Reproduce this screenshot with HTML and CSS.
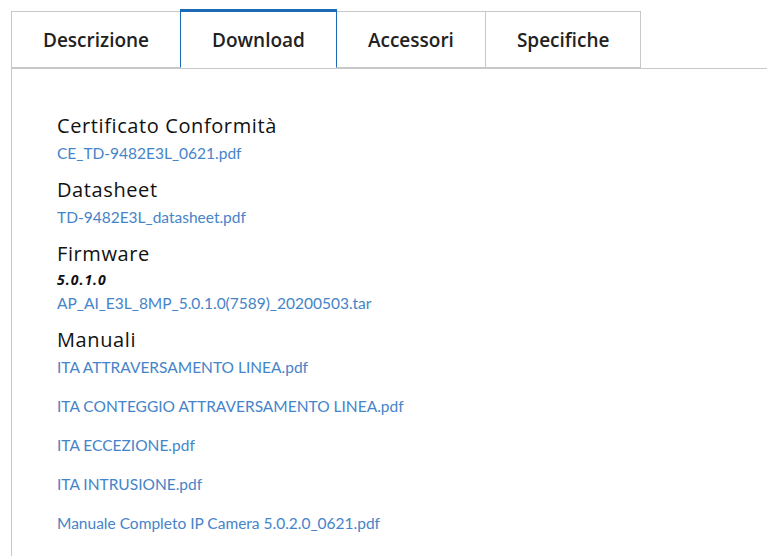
FILE: index.html
```html
<!DOCTYPE html>
<html lang="it">
<head>
    <meta charset="UTF-8">
    <meta name="viewport" content="width=device-width, initial-scale=1.0">
    <title>Download</title>
    <link rel="stylesheet" href="styles.css">
</head>
<body>
    <div class="product-tabs">
        <ul class="tab-nav">
            <li class="tab">Descrizione</li>
            <li class="tab active">Download</li>
            <li class="tab">Accessori</li>
            <li class="tab">Specifiche</li>
        </ul>
        <div class="tab-panel">
            <div class="doc-group">
                <h3>Certificato Conformità</h3>
                <ul class="doc-list">
                    <li><a href="#">CE_TD-9482E3L_0621.pdf</a></li>
                </ul>
            </div>
            <div class="doc-group">
                <h3>Datasheet</h3>
                <ul class="doc-list">
                    <li><a href="#">TD-9482E3L_datasheet.pdf</a></li>
                </ul>
            </div>
            <div class="doc-group">
                <h3>Firmware</h3>
                <div class="version">5.0.1.0</div>
                <ul class="doc-list">
                    <li><a href="#">AP_AI_E3L_8MP_5.0.1.0(7589)_20200503.tar</a></li>
                </ul>
            </div>
            <div class="doc-group">
                <h3>Manuali</h3>
                <ul class="doc-list">
                    <li><a href="#">ITA ATTRAVERSAMENTO LINEA.pdf</a></li>
                    <li><a href="#">ITA CONTEGGIO ATTRAVERSAMENTO LINEA.pdf</a></li>
                    <li><a href="#">ITA ECCEZIONE.pdf</a></li>
                    <li><a href="#">ITA INTRUSIONE.pdf</a></li>
                    <li><a href="#">Manuale Completo IP Camera 5.0.2.0_0621.pdf</a></li>
                </ul>
            </div>
        </div>
    </div>
</body>
</html>
```

FILE: styles.css
```css
body {
    margin: 0;
    font-family: Lato, "Noto Sans", sans-serif;
    background: #fff;
    color: #111;
}
.product-tabs {
    padding: 9px 0 0 11px;
}
.tab-nav {
    display: flex;
    align-items: flex-end;
    list-style: none;
    margin: 0;
    padding: 0;
}
.tab {
    height: 57px;
    box-sizing: border-box;
    padding: 0 31px;
    display: flex;
    align-items: center;
    justify-content: center;
    border: 1px solid #c8c8c8;
    margin-left: -1px;
    font-family: "Open Sans", sans-serif;
    font-size: 19px;
    font-weight: 600;
    color: #222;
    background: #fff;
}
.tab:first-child {
    margin-left: 0;
}
.tab.active {
    height: 59px;
    border-color: #1a6ab5;
    border-top-width: 3px;
    border-bottom-color: #fff;
    position: relative;
    z-index: 1;
}
.tab-panel {
    border-left: 1px solid #c8c8c8;
    border-top: 1px solid #c8c8c8;
    padding: 43px 0 20px 45px;
}
.doc-group {
    margin-bottom: 11px;
}
.doc-group h3 {
    margin: 0 0 2px;
    padding-top: 1px;
    font-family: "Open Sans", sans-serif;
    font-size: 20px;
    line-height: 26px;
    font-weight: 500;
    letter-spacing: 0.6px;
    color: #111;
}
.version {
    font-family: "Open Sans", sans-serif;
    font-size: 14px;
    line-height: 22px;
    font-weight: 700;
    font-style: italic;
    letter-spacing: 1px;
}
.doc-list {
    list-style: none;
    margin: 0;
    padding: 0;
    display: flex;
    flex-direction: column;
    gap: 15px;
}
.doc-list li {
    line-height: 24px;
    font-size: 15.5px;
}
.doc-list a {
    color: #4584c9;
    text-decoration: none;
    font-weight: 400;
}
```
